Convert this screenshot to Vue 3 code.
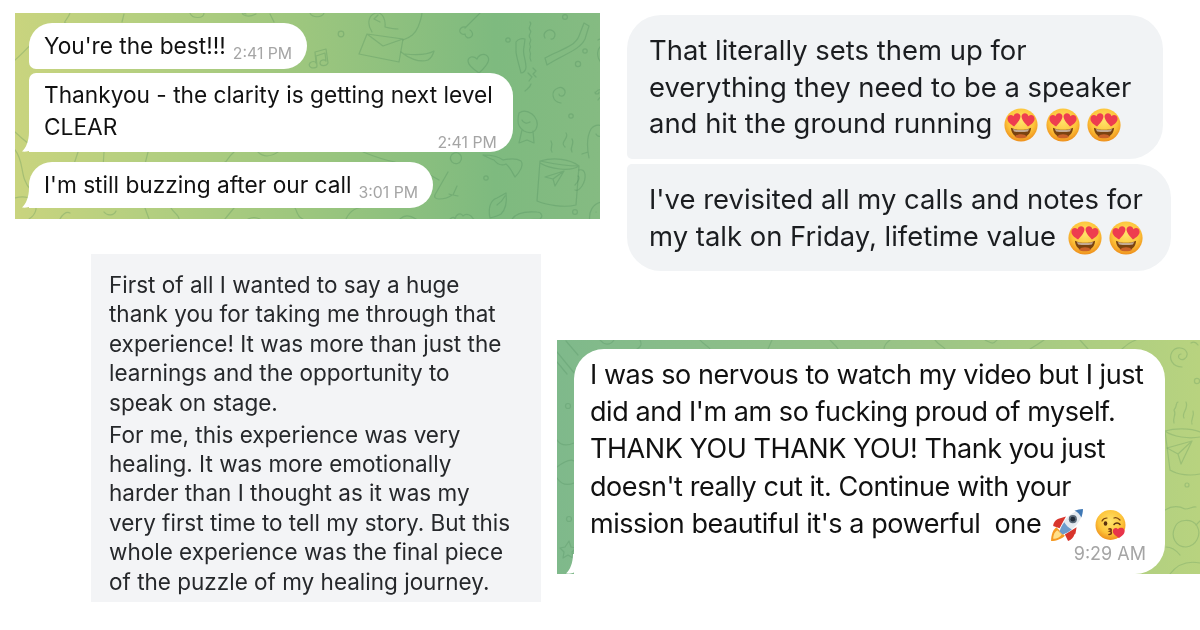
<template>
  <div class="page">
    <svg class="defs" aria-hidden="true">
      <defs>
        <radialGradient id="face" cx="50%" cy="38%" r="62%">
          <stop offset="0%" stop-color="#ffe36a" />
          <stop offset="65%" stop-color="#fdc43a" />
          <stop offset="100%" stop-color="#ee8f1c" />
        </radialGradient>
        <symbol id="heart-eyes" viewBox="0 0 32 32">
          <circle cx="16" cy="16" r="15.6" fill="url(#face)" />
          <path d="M6.5 18.5c3 1.5 6 2 9.500 2s6.500-.5 9.500-2c-.4 5.800-4.500 9.500-9.500 9.500s-9.100-3.700-9.500-9.500z" fill="#7a4310" />
          <path d="M8.500 19.700c2.500.8 5 1.100 7.500 1.100s5-.3 7.500-1.100c-.2 1-.6 1.700-1 2.300-2 .5-4.300.7-6.500.7s-4.500-.2-6.500-.7c-.4-.6-.8-1.300-1-2.300z" fill="#fff" opacity=".55" />
          <path d="M10 27c1.600-1.700 3.700-2.400 6-2.400s4.400.7 6 2.400c-1.700 1-3.700 1.400-6 1.400s-4.300-.4-6-1.400z" fill="#c9622a" />
          <path d="M9.500 17.300C6.300 15.300 2.700 13 3.300 9.300 3.800 6.500 7 5.600 9 7.800c.5-2.900 3.700-3.900 5.600-2 2.100 2.200.3 6-5.100 11.500z" fill="#ee3d4f" />
          <path d="M22.500 17.300c3.200-2 6.800-4.300 6.200-8-.5-2.800-3.700-3.700-5.700-1.500-.5-2.900-3.700-3.900-5.600-2-2.100 2.200-.3 6 5.100 11.500z" fill="#ee3d4f" />
        </symbol>
      </defs>
    </svg>

    <div class="col-left">
      <section class="tg tg-top">
        <svg class="doodles" viewBox="15 13 585 206">
          <g fill="none" stroke="#3f7f52" stroke-opacity=".25" stroke-width="1.200" stroke-linecap="round" stroke-linejoin="round">
            <path d="M367 34l36 5-4 23-40-8zM367 34l16 12 20-7" />
            <path d="M372 32c-6-9-3-19 6-19 4 0 8 6 7 14M378 15l-4 4 6 3M385 27c4 1 8 2 13 2M403 40c8-3 12-6 15-13 2-5 4-10 4-15M401 52c7 6 18 11 27 8 3-2 5-5 6-9-7 4-20 4-29 3" />
            <path d="M465 28l19-19M466 27c-4-1-7 2-6 5 1 2 3 3 5 2 0 3 3 5 6 3 3-2 1-6-1-7M485 9l3-3" />
            <path d="M313 68c-3 0-5-3-3-5 2-2 5-2 6 0l-1-11 11-3 2 14c-2 4-8 3-8 0 0-3 4-4 6-2l-1-8-9 3 1 10c0 1-2 2-5 2z" />
            <path d="M479 73c-6-4-11-8-11-12 0-4 5-6 9-2 1-3 5-6 9-4 5 3 3 9-7 18z" />
            <path d="M530 22c3 3-3 5 0 8s-3 4 0 8-2 4 0 7-2 4 0 7-2 4 1 9" />
            <path d="M545 58c14-8 30-11 34-22l5-13 5 3-4 13c-5 11-21 15-38 26z" />
            <path d="M516 42c2-3 6-4 9-3l-1 8c-2 6 2 13 2 20 0 4-3 6-5 6-2-9-5-17-5-22 0-4 0-7 0-9z" />
            <path d="M545 38c-3-5 3-10 8-7 4 3 1 9-2 8" />
            <path d="M561 103c-9-1-11-12-3-15 5-2 9 3 6 7-2 2-5 1-5-1" />
            <path d="M598 40c3-2 7 0 7 3M600 47c-4 4-3 13 3 17M601 66l1 5" />
            <path d="M596 92c3-4 8-2 9 0M598 100c3-5 7-5 9-3M597 92m-2 0a2 2 0 1 0 4 0" />
            <path d="M528 73l4 4-3 4M533 68l3 3-3 3 3 3M531 84c-1 4-4 5-6 7" />
            <path d="M519 113c4-3 9-2 13 1 4 3 7 9 4 15-3 5-8 4-12 2-3-2-6-5-6-10 0-3 0-5 1-8zM522 130l-3 13 8-3 7 3-1-12M522 120c1 3 5 4 8 2" />
            <path d="M494 160c-4-1-7-3-11-5 5 0 15 1 20 5 5-1 12-3 18 1 3 4-1 11-6 16-3-5-5-10-9-13-4 2-8 1-12-4z" />
            <path d="M452 162a5.500 5.500 0 1 1 .1 .1zM448 172l-12 21c-3 4-1 6 3 6s8 0 13-4l-3-1M430 175l9 5M457 186l-4 9 5 1" />
            <path d="M540 161c14 3 30 5 39 5l-3 39c-12 3-30 0-39-4l3-40zM540 161c14-4 30-2 39 5M540 163c10 6 30 9 39 3" />
            <path d="M579 170c7-2 8 8 3 16-2 3-5 5-7 4M578 176c2 1 1 5-3 9" />
            <path d="M545 177l19-6-9 15-2-7-8-2zM553 179l11-8" />
            <path d="M552 152c-3-4 2-6-1-11M565 147c-6-5 5-9 1-14M572 152c-3-4 3-8 0-13" />
            <path d="M490 218c-2-9 0-18 7-20l9-5c1 8 0 16-5 21-3 2-7 3-11 4zM497 205c3-2 6-5 8-9" />
            <path d="M511 222c2-8 12-11 26-10 5 0 6 5 3 7-8 0-14 1-17 3" />
            <path d="M590 222c-2-10 3-19 12-20l5 1M596 212h.1M601 208h.1" />
            <path d="M589 158c-2-10-2-22 2-29 4-5 10-4 14-2M596 134c1 2 3 3 5 2M588 152c-2 1-4 1-6 2" />
            <path d="M448 222c3-5 6-6 7-3 1-5 6-7 8-3 2-2 5-2 8 0l5 6" />
            <path d="M363 152c10 4 20 8 32 10M360 171c4-2 8 0 10 4M336 177l6 6 8-7M346 219c4-9 12-12 20-12" />
            <path d="M15 60c12-10 22-25 38-32M15 132c6 6 14 12 14 12M15 150c10 12 4 28 16 40M15 198c20-6 28 12 14 21M60 219c2-4 6-8 10-6M78 152l-6 18 20-3M104 152l-1 16M104 212c3 4 10 4 12-1M148 152l-4 16M234 152c-6 5-8 11-9 10M234 208l-9 11M256 14c-12 6-18-4-10 0M190 13c2 6 14 6 14 0M70 13c-2 6-8 10-4 10M124 14l-2 8M145 208l4 11M171 208c3 5 8 7 8 11M295 208c3 5 2 9 8 11M310 13c2 5 12 5 14 0M270 14l4 8M248 219c4-2 8-2 12 0M400 219c4-4 10-4 16 0M258 152c6 6 14 4 20 0" />
            <circle cx="341" cy="34" r="2.800" /><circle cx="565" cy="17" r="2.400" /><circle cx="585" cy="51" r="2.200" /><circle cx="578" cy="64" r="2.600" /><circle cx="508" cy="40" r="2.200" /><circle cx="486" cy="178" r="2.200" /><circle cx="575" cy="212" r="2.400" /><circle cx="571" cy="116" r="2.200" />
          </g>
        </svg>
        <div class="bubble b-one">
          <span>You're the best!!!</span><span class="time time-inline">2:41 PM</span>
        </div>
        <div class="bubble b-two">
          <span class="line">Thankyou - the clarity is getting next level<br />CLEAR</span>
          <span class="time time-end">2:41 PM</span>
          <svg class="tail" viewBox="0 0 20 20"><path d="M7 0C7 9 4 16 0 19.500c4 .5 8-.5 11-2.500 2 2 5 3 9 3V0z" fill="#fff" /></svg>
        </div>
        <div class="bubble b-three">
          <span>I'm still buzzing after our call</span><span class="time time-inline">3:01 PM</span>
          <svg class="tail" viewBox="0 0 20 20"><path d="M7 0C7 9 4 16 0 19.500c4 .5 8-.5 11-2.500 2 2 5 3 9 3V0z" fill="#fff" /></svg>
        </div>
      </section>

      <section class="note">
        <p v-for="(para, i) in note" :key="i">
          <template v-for="(line, j) in para" :key="j">{{ line }}<br /></template>
        </p>
      </section>
    </div>

    <div class="col-right">
      <div class="grey grey-one">
        That literally sets them up for<br />
        everything they need to be a speaker<br />
        and hit the ground running
        <svg class="emoji first"><use href="#heart-eyes" /></svg><svg class="emoji"><use href="#heart-eyes" /></svg><svg class="emoji"><use href="#heart-eyes" /></svg>
      </div>
      <div class="grey grey-two">
        I've revisited all my calls and notes for<br />
        my talk on Friday, lifetime value
        <svg class="emoji first"><use href="#heart-eyes" /></svg><svg class="emoji"><use href="#heart-eyes" /></svg>
      </div>

      <section class="tg tg-bottom">
        <svg class="doodles" viewBox="557 340 643 234">
          <g fill="none" stroke="#3f7f52" stroke-opacity=".22" stroke-width="1.200" stroke-linecap="round" stroke-linejoin="round">
            <path d="M557 352l18 22M557 362l10 12M566 341l12 14M557 440c4 6 10 6 17 3M557 467c8-6 14-8 17-6M557 478c4 6 10 8 17 5M569 541l2 6 5 1-4 4 1 6-5-3-5 3 1-6-4-4 5-1z" />
            <path d="M600 340c4 5 10 6 14 0M640 340c2 4 1 7-3 9M700 340c4 5 8 6 10 9M772 340l-4 9M830 340c2 3 6 5 8 9M890 340c-4 3-6 6-6 9M935 340c5 6 8 6 10 9M985 340c6 3 8 5 12 0M1030 349c6-4 10-6 14-9M1080 340l8 9M1122 349c4-4 8-7 14-9" />
            <path d="M1182 367c-9 0-14-8-10-15 4-6 13-5 15 1 1 5-5 9-8 5-1-2 0-4 2-4M1191 343c3-2 5-1 7 2" />
            <path d="M1174 423c-2-5 3-8 0-13 4-5 1-7 4-8M1184 418c-3-5 5-9 2-16M1192 424c-2-4 3-8 1-13" />
            <path d="M1165 431c10-3 25-3 35 1M1165 431l5 39c8 5 20 6 30 4M1165 431c8 6 24 8 35 6" />
            <path d="M1167 448l25-7-11 23-3-10zM1178 454l14-13" />
            <path d="M1165 510c8-5 14-4 20-1 5 0 8-3 11-2M1175 527c3-8 17-9 22-1 5 9-1 20-11 21-10 0-16-10-11-20zM1166 547c6 0 10 3 14 8M1170 574c6-8 15-14 30-11M1196 525l4-4" />
            <circle cx="1197" cy="381" r="2.600" /><circle cx="568" cy="406" r="2.500" /><circle cx="569" cy="519" r="2.500" /><circle cx="1187" cy="485" r="2" />
          </g>
        </svg>
        <div class="bubble b-big">
          <span class="line">
            I was so nervous to watch my video but I just<br />
            did and I'm am so fucking proud of myself.<br />
            THANK YOU THANK YOU! Thank you just<br />
            doesn't really cut it. Continue with your<br />
            mission beautiful it's a powerful&nbsp; one
            <svg class="emoji rocket" viewBox="0 0 32 32">
              <path d="M1 31c0-6 2-11 5-13l8 8c-3 3-8 5-13 5z" fill="#f59a23" />
              <path d="M3 29c0-4 2-7 4-8l4 4c-1 2-4 4-8 4z" fill="#ffe08a" />
              <path d="M8 10l7-2-6 11-6-2c0-3 2-6 5-7z" fill="#d8352c" />
              <path d="M24 24l-1 1c-1 3-3 5-6 6l-3-6 11-7z" fill="#d8352c" />
              <path d="M9 22C11 12 20 3 31 1c0 11-9 20-19 24z" fill="#e3e9ef" />
              <path d="M23 2.500c2.600-.8 5.300-1.300 8-1.500 0 2.700-.6 5.400-1.500 8-1-3-3.500-5.500-6.500-6.500z" fill="#3f78b5" />
              <path d="M9 22c1-3 2.500-6 4.500-8.500 1.800 3.200 3.800 5.200 7 6.800-2.500 2-5.500 3.700-8.500 4.700z" fill="#6d9bcb" />
              <circle cx="21.500" cy="10.500" r="3.800" fill="#5b6b7a" /><circle cx="21.500" cy="10.500" r="2.200" fill="#1f2a38" />
            </svg>
            <svg class="emoji kiss" viewBox="0 0 32 32">
              <circle cx="15.500" cy="16" r="15" fill="url(#face)" />
              <path d="M7 12c1-2 3-3 5-3M19 9c2-1 4 0 6 2" fill="none" stroke="#7a4310" stroke-width="1.200" stroke-linecap="round" />
              <ellipse cx="10.500" cy="14.500" rx="1.800" ry="2.300" fill="#5a3210" />
              <path d="M19 15.500c1.500-2 4.500-2 6 0" fill="none" stroke="#5a3210" stroke-width="1.500" stroke-linecap="round" />
              <path d="M14 20c2.500-.5 3 1.500 1 2.300 2 .7 2 3-1 3.200" fill="none" stroke="#7a3a10" stroke-width="1.700" stroke-linecap="round" />
              <path d="M24 29c-4-2.500-7-5-6-8 .8-2.400 3.700-2.700 5-.7 1.300-2 4.700-1.900 6 0 2 3-1 6.500-5 8.700z" fill="#e8344a" />
            </svg>
          </span>
          <span class="time time-big">9:29 AM</span>
          <svg class="tail tail-big" viewBox="0 0 20 20"><path d="M7 0C7 9 4 16 0 19.500c4 .5 8-.5 11-2.500 2 2 5 3 9 3V0z" fill="#fff" /></svg>
        </div>
      </section>
    </div>
  </div>
</template>

<script setup>
const note = [
  [
    'First of all I wanted to say a huge',
    'thank you for taking me through that',
    'experience! It was more than just the',
    'learnings and the opportunity to',
    'speak on stage.',
  ],
  [
    'For me, this experience was very',
    'healing. It was more emotionally',
    'harder than I thought as it was my',
    'very first time to tell my story. But this',
    'whole experience was the final piece',
    'of the puzzle of my healing journey.',
  ],
];
</script>

<style>
html,
body {
  margin: 0;
  background: #fff;
}
</style>

<style scoped>
.page {
  display: flex;
  width: 1200px;
  height: 630px;
  overflow: hidden;
  background: #fff;
  font-family: Inter, "Liberation Sans", sans-serif;
  color: #111;
}
.defs {
  position: absolute;
  width: 0;
  height: 0;
}
.col-left {
  width: 557px;
  flex: none;
  padding: 13px 0 0 15px;
  box-sizing: border-box;
}
.col-right {
  width: 643px;
  flex: none;
  padding-top: 15px;
  box-sizing: border-box;
}

.tg {
  position: relative;
  filter: blur(0.35px);
}
.doodles {
  position: absolute;
  inset: 0;
  width: 100%;
  height: 100%;
}
.tg-top {
  width: 585px;
  height: 206px;
  box-sizing: border-box;
  padding: 10px 0 0 14px;
  display: flex;
  flex-direction: column;
  align-items: flex-start;
  gap: 4px;
  background: linear-gradient(90deg, #c9d47e 0%, #b4cf80 22%, #9cc67e 50%, #7eba7f 82%, #85bb82 100%);
}
.tg-bottom {
  width: 643px;
  height: 234px;
  margin-top: 69px;
  box-sizing: border-box;
  padding: 9px 0 0 17px;
  background: linear-gradient(90deg, #7fb98b 0%, #97c287 50%, #b8d37f 100%);
}

.bubble {
  position: relative;
  background: #fff;
  border-radius: 23px;
  box-sizing: border-box;
  font-size: 22.700px;
  line-height: 32px;
  white-space: nowrap;
}
.line {
  display: block;
}
.b-one {
  height: 46px;
  padding: 7px 15px 0 15px;
  border-bottom-left-radius: 7px;
}
.b-two {
  height: 79px;
  padding: 6px 20px 0 15px;
  display: flex;
  flex-direction: column;
  border-top-left-radius: 7px;
  border-bottom-left-radius: 0;
}
.b-three {
  height: 46px;
  margin-top: 6px;
  padding: 7px 15px 0 15px;
  border-bottom-left-radius: 0;
}
.time {
  font-size: 15.800px;
  color: #a5a5a5;
}
.time-inline {
  margin-left: 7px;
  position: relative;
  top: 5px;
}
.time-end {
  align-self: flex-end;
  margin: -9px -4px 0 0;
  line-height: 18px;
}
.tail {
  position: absolute;
  left: -7px;
  bottom: 0;
  width: 20px;
  height: 20px;
}

.note {
  width: 450px;
  height: 348px;
  margin: 35px 0 0 76px;
  padding: 16px 0 0 18px;
  box-sizing: border-box;
  background: #f3f4f6;
  color: #26282b;
  font-size: 22.500px;
  line-height: 29.400px;
  white-space: nowrap;
  filter: blur(0.3px);
}
.note p {
  margin: 0 0 2.600px;
}

.grey {
  margin-left: 70px;
  box-sizing: border-box;
  padding: 17px 0 0 22px;
  background: #f1f3f5;
  color: #1b1d20;
  font-size: 27.450px;
  line-height: 36.500px;
  white-space: nowrap;
  border-radius: 34px;
  filter: blur(0.3px);
}
.grey-one {
  width: 536px;
  height: 144px;
  border-bottom-left-radius: 5px;
}
.grey-two {
  width: 544px;
  height: 107px;
  margin-top: 5px;
  border-top-left-radius: 5px;
}
.emoji {
  display: inline-block;
  width: 34px;
  height: 34px;
  margin-left: 7.500px;
  vertical-align: -9px;
}
.emoji.first {
  margin-left: 4px;
}

.b-big {
  width: 591px;
  height: 225px;
  padding: 7px 19px 0 16px;
  font-size: 27px;
  letter-spacing: -0.440px;
  line-height: 37.200px;
  border-radius: 30px;
  border-bottom-left-radius: 0;
  display: flex;
  flex-direction: column;
}
.time-big {
  align-self: flex-end;
  font-size: 18px;
  letter-spacing: 0;
  line-height: 22px;
  margin-top: 1px;
}
.tail-big {
  left: -8px;
}
.rocket {
  margin-left: 2px;
}
.kiss {
  width: 32px;
  height: 32px;
  margin-left: 11px;
  vertical-align: -8px;
}
</style>
